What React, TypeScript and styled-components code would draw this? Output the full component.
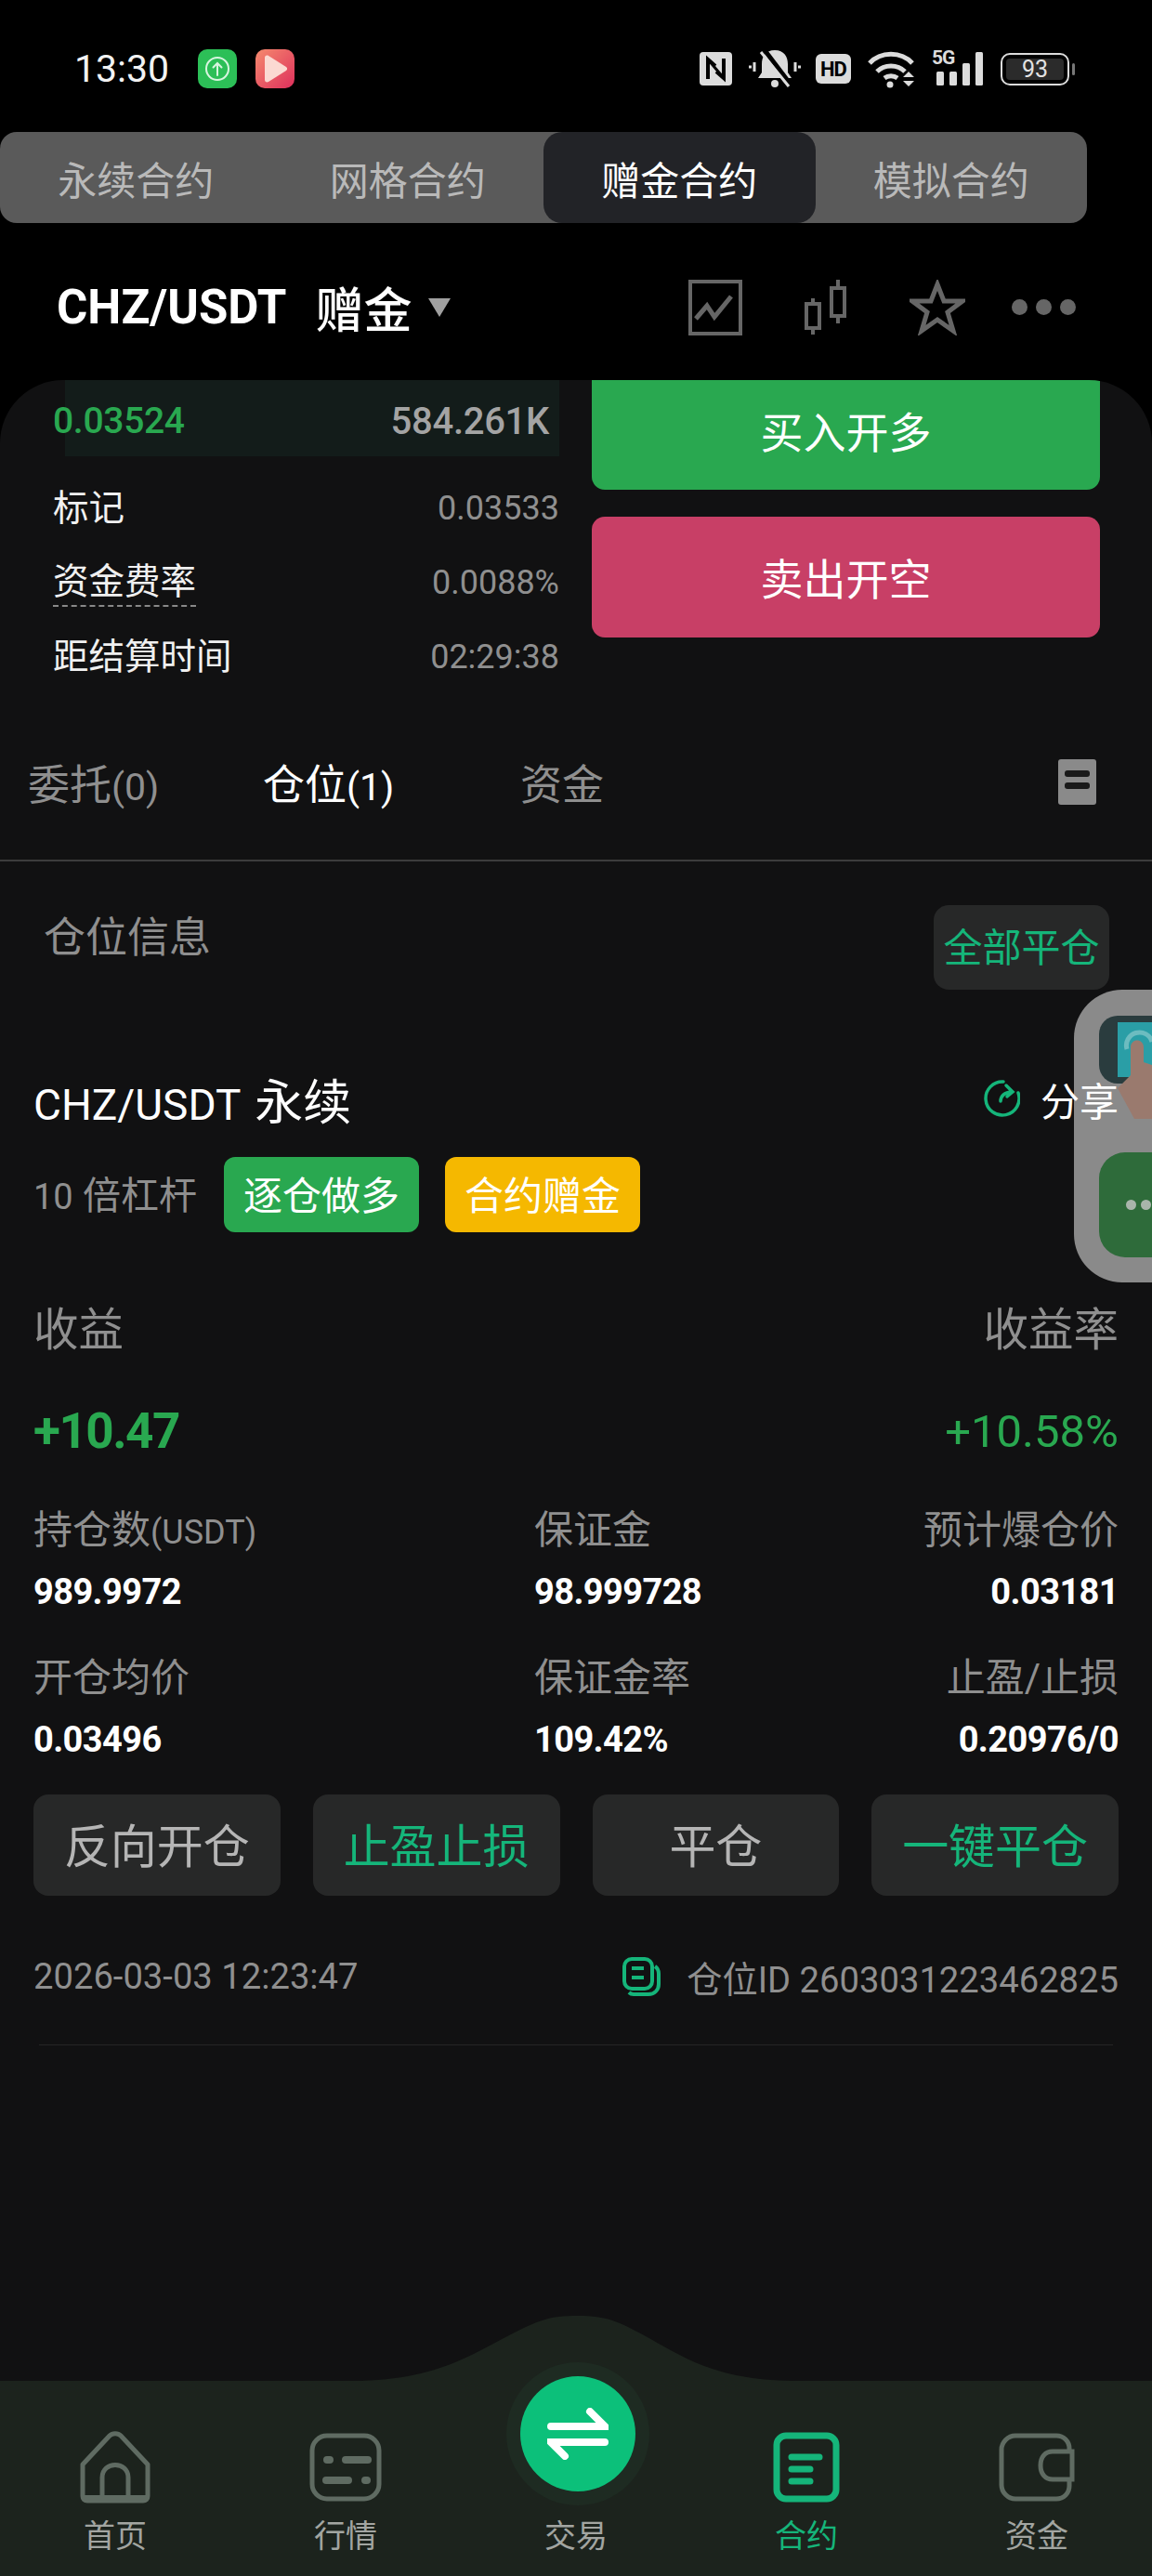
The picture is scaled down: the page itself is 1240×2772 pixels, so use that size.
import React from "react";
import styled, { createGlobalStyle } from "styled-components";

const GlobalStyle = createGlobalStyle`
  html, body {
    margin: 0;
    padding: 0;
    background: #000;
  }
  * {
    box-sizing: border-box;
  }
`;

const GREEN = "#29a850";
const MINT = "#15b57a";
const GREY = "#8f8f8f";

const Page = styled.div`
  position: relative;
  width: 1240px;
  height: 2772px;
  overflow: hidden;
  display: flex;
  flex-direction: column;
  background: #000;
  color: #fff;
  font-family: Roboto, "Noto Sans CJK SC", sans-serif;
`;

/* status bar */
const StatusBar = styled.div`
  height: 142px;
  padding: 53px 89px 0 80px;
  display: flex;
  align-items: flex-start;
  justify-content: space-between;
`;

const StatusLeft = styled.div`
  display: flex;
  align-items: center;
  height: 42px;
`;

const Clock = styled.span`
  font-size: 41px;
  width: 133px;
  color: #f2f2f2;
`;

const AppTile = styled.div<{ $bg: string }>`
  width: 42px;
  height: 42px;
  border-radius: 10px;
  margin-right: 20px;
  background: ${(p) => p.$bg};
  display: flex;
  align-items: center;
  justify-content: center;
`;

const StatusRight = styled.div`
  display: flex;
  align-items: center;
  height: 42px;
`;

const BellIcon = styled.svg`
  margin-left: 18px;
`;

const HdBadge = styled.span`
  width: 38px;
  height: 32px;
  margin: 0 18px 0 16px;
  border-radius: 6px;
  background: #dcdcdc;
  color: #000;
  font-size: 22px;
  font-weight: 700;
  letter-spacing: -1px;
  display: flex;
  align-items: center;
  justify-content: center;
`;

const SignalWrap = styled.div`
  position: relative;
  width: 56px;
  height: 42px;
  margin: 0 18px 0 15px;
`;

const FiveG = styled.span`
  position: absolute;
  left: 0;
  top: -2px;
  font-size: 21px;
  font-weight: 700;
  color: #dcdcdc;
  letter-spacing: -1px;
  line-height: 22px;
`;

const Battery = styled.div`
  position: relative;
  width: 74px;
  height: 35px;
  border: 2px solid #dcdcdc;
  border-radius: 10px;
  padding: 4px;
  &::after {
    content: "";
    position: absolute;
    right: -8px;
    top: 9px;
    width: 3px;
    height: 13px;
    border-radius: 2px;
    background: #777;
  }
`;

const BatteryFill = styled.div`
  height: 100%;
  border-radius: 4px;
  background: #2b2b2b;
  color: #e2e2e2;
  font-size: 25px;
  display: flex;
  align-items: center;
  justify-content: center;
`;

/* contract switcher */
const Segmented = styled.div`
  width: 1170px;
  height: 98px;
  flex-shrink: 0;
  border-radius: 18px;
  background: #5a5a5a;
  display: grid;
  grid-template-columns: repeat(4, 1fr);
`;

const Segment = styled.div<{ $active?: boolean }>`
  border-radius: 20px;
  display: flex;
  align-items: center;
  justify-content: center;
  font-size: 42px;
  background: ${(p) => (p.$active ? "#222327" : "transparent")};
  color: ${(p) => (p.$active ? "#fff" : "#b9b9b9")};
`;

/* pair header */
const PairHeader = styled.div`
  height: 169px;
  flex-shrink: 0;
  padding: 23px 82px 11px 61px;
  display: flex;
  align-items: center;
`;

const PairName = styled.span`
  font-size: 51px;
  font-weight: 700;
  margin-right: 31px;
`;

const PairTag = styled.span`
  font-size: 52px;
  font-weight: 500;
  margin-right: 18px;
`;

const Caret = styled.span`
  width: 0;
  height: 0;
  border-left: 12px solid transparent;
  border-right: 12px solid transparent;
  border-top: 20px solid #a0a0a0;
  margin-right: auto;
`;

const HeaderIcons = styled.div`
  display: flex;
  align-items: center;
  gap: 66px;
`;

const Dots = styled.div`
  display: flex;
  gap: 9px;
  margin-left: -16px;
`;

const Dot = styled.span<{ $size?: number; $color?: string }>`
  width: ${(p) => p.$size ?? 17}px;
  height: ${(p) => p.$size ?? 17}px;
  border-radius: 50%;
  background: ${(p) => p.$color ?? "#666"};
`;

/* main panel */
const Panel = styled.div`
  flex: 1;
  display: flex;
  flex-direction: column;
  background: #111112;
  border-radius: 68px 68px 0 0;
  overflow: hidden;
`;

const TradeArea = styled.div`
  height: 354px;
  flex-shrink: 0;
  padding: 0 56px 0 57px;
  display: grid;
  grid-template-columns: 545px 547px;
  column-gap: 35px;
`;

const BookRow = styled.div`
  height: 82px;
  padding: 6px 11px 0 0;
  display: flex;
  align-items: center;
  justify-content: space-between;
  background: linear-gradient(to right, transparent 13px, #131c1a 13px);
`;

const BidPrice = styled.span`
  font-size: 39px;
  font-weight: 500;
  letter-spacing: -0.300px;
  color: ${GREEN};
`;

const BidSize = styled.span`
  font-size: 40px;
  font-weight: 500;
  letter-spacing: -0.300px;
  color: #a4a4a4;
`;

const InfoRow = styled.div`
  height: 80px;
  padding-top: 2px;
  display: flex;
  align-items: center;
  justify-content: space-between;
  &:nth-child(2) {
    margin-top: 15px;
  }
`;

const InfoLabel = styled.span<{ $dashed?: boolean }>`
  font-size: 38.5px;
  color: #f0f0f0;
  line-height: 50px;
  border-bottom: ${(p) => (p.$dashed ? "2px dashed #888" : "0")};
`;

const InfoValue = styled.span`
  font-size: 36px;
  color: ${GREY};
`;

const TradeButtons = styled.div`
  display: flex;
  flex-direction: column;
`;

const TradeButton = styled.div<{ $bg: string; $h: number; $mt?: number }>`
  height: ${(p) => p.$h}px;
  margin-top: ${(p) => p.$mt ?? 0}px;
  padding-bottom: ${(p) => (p.$mt ? 3 : 12)}px;
  background: ${(p) => p.$bg};
  border-radius: ${(p) => (p.$mt ? "14px" : "0 0 14px 14px")};
  display: flex;
  align-items: center;
  justify-content: center;
  font-size: 46px;
`;

const OrderTabs = styled.div`
  height: 164px;
  flex-shrink: 0;
  padding: 0 60px 6px 30px;
  display: grid;
  grid-template-columns: 253px 277px 1fr auto;
  align-items: center;
  border-bottom: 2px solid #3c3c3c;
`;

const OrderTab = styled.span<{ $active?: boolean }>`
  font-size: 45px;
  color: ${(p) => (p.$active ? "#fff" : GREY)};
`;

const Count = styled.span`
  font-size: 41px;
`;

const DocIcon = styled.div`
  width: 41px;
  height: 49px;
  background: #8a8a8a;
  border-radius: 3px;
  display: flex;
  flex-direction: column;
  justify-content: center;
  gap: 6px;
  padding: 0 7px 4px;
`;

const DocLine = styled.span`
  height: 7px;
  border-radius: 3px;
  background: #1a1a1a;
`;

const SectionHead = styled.div`
  padding: 47px 46px 0 47px;
  display: flex;
  justify-content: space-between;
  align-items: flex-start;
`;

const SectionTitle = styled.span`
  font-size: 45px;
  color: ${GREY};
  line-height: 72px;
`;

const CloseAll = styled.div`
  width: 189px;
  height: 91px;
  padding-bottom: 6px;
  border-radius: 16px;
  background: #272828;
  color: ${MINT};
  font-size: 42px;
  display: flex;
  align-items: center;
  justify-content: center;
`;

const Position = styled.div`
  padding: 0 36px;
  display: flex;
  flex-direction: column;
`;

const TitleRow = styled.div`
  height: 70px;
  margin-top: 85px;
  padding-bottom: 6px;
  display: flex;
  align-items: center;
  justify-content: space-between;
`;

const PositionName = styled.span`
  font-size: 52px;
`;

const PositionPair = styled.span`
  font-size: 46px;
  margin-right: 2px;
`;

const Share = styled.div`
  position: relative;
  z-index: 2;
  display: flex;
  align-items: center;
  gap: 22px;
  font-size: 42px;
`;

const TagRow = styled.div`
  height: 81px;
  margin-top: 25px;
  display: flex;
  align-items: center;
`;

const Leverage = styled.span`
  font-size: 41px;
  width: 205px;
  padding-bottom: 5px;
  color: ${GREY};
`;

const LeverageNum = styled.span`
  font-size: 38px;
`;

const Tag = styled.div<{ $bg: string }>`
  width: 210px;
  height: 81px;
  margin-right: 28px;
  padding-bottom: 5px;
  border-radius: 12px;
  background: ${(p) => p.$bg};
  font-size: 42px;
  display: flex;
  align-items: center;
  justify-content: center;
`;

const PnlLabels = styled.div`
  height: 60px;
  margin-top: 74px;
  padding-bottom: 6px;
  display: flex;
  align-items: center;
  justify-content: space-between;
`;

const PnlValues = styled.div`
  height: 60px;
  margin-top: 47px;
  padding-top: 6px;
  display: flex;
  align-items: center;
  justify-content: space-between;
`;

const PnlLabel = styled.span`
  font-size: 48.5px;
  color: ${GREY};
`;

const PnlValue = styled.span`
  font-size: 53px;
  font-weight: 700;
  letter-spacing: -1.5px;
  color: ${GREEN};
`;

const PnlRate = styled.span`
  font-size: 49px;
  color: ${GREEN};
`;

const Stats = styled.div`
  margin-top: 53px;
  display: grid;
  grid-template-columns: 539px 1fr 1fr;
  row-gap: 43px;
`;

const Stat = styled.div<{ $right?: boolean }>`
  display: flex;
  flex-direction: column;
  align-items: ${(p) => (p.$right ? "flex-end" : "flex-start")};
`;

const StatLabel = styled.span`
  height: 50px;
  line-height: 54px;
  font-size: 42px;
  color: ${GREY};
  white-space: nowrap;
`;

const LabelUnit = styled.span`
  font-size: 36px;
`;

const StatValue = styled.span`
  height: 46px;
  line-height: 46px;
  margin-top: 20px;
  font-size: 38px;
  font-weight: 700;
  letter-spacing: -0.6px;
  color: #fff;
`;

const Actions = styled.div`
  margin-top: 36px;
  display: grid;
  grid-template-columns: repeat(4, 1fr);
  column-gap: 35px;
`;

const Action = styled.div<{ $mint?: boolean }>`
  height: 109px;
  padding-bottom: 6px;
  border-radius: 16px;
  background: #272828;
  color: ${(p) => (p.$mint ? MINT : "#b5b5b5")};
  font-size: 50px;
  display: flex;
  align-items: center;
  justify-content: center;
`;

const FootRow = styled.div`
  height: 50px;
  margin-top: 62px;
  display: flex;
  align-items: center;
  justify-content: space-between;
`;

const FootText = styled.span`
  font-size: 38.2px;
  color: ${GREY};
`;

const FootId = styled.div`
  display: flex;
  align-items: center;
  gap: 28px;
`;

const CardRule = styled.div`
  height: 1px;
  margin: 48px 6px 0;
  background: #252525;
`;

/* floating assistant */
const FloatPill = styled.div`
  position: absolute;
  right: 0;
  top: 1065px;
  width: 84px;
  height: 315px;
  padding: 28px 0 0 27px;
  border-radius: 52px 0 0 52px;
  background: #8a8a8a;
`;

const PillHand = styled.div`
  width: 57px;
  height: 73px;
  border-radius: 20px 0 0 20px;
  background: #2a3c3e;
`;

const HandDrawing = styled.svg`
  display: block;
`;

const PillMore = styled.div`
  width: 57px;
  height: 113px;
  margin-top: 74px;
  padding-left: 29px;
  border-radius: 28px 0 0 28px;
  background: #2e6b3a;
  display: flex;
  align-items: center;
  gap: 5px;
  overflow: hidden;
`;

/* bottom navigation */
const BottomNav = styled.div`
  position: relative;
  height: 210px;
  flex-shrink: 0;
  background: #1c231d;
  display: grid;
  grid-template-columns: repeat(5, 1fr);
  align-items: end;
  padding-bottom: 19px;
`;

const NavBump = styled.svg`
  position: absolute;
  left: 360px;
  top: -70px;
`;

const TradeHalo = styled.div`
  position: absolute;
  left: 545px;
  top: -20px;
  width: 154px;
  height: 154px;
  border-radius: 50%;
  background: #1e2b22;
  display: flex;
  align-items: center;
  justify-content: center;
`;

const TradeDisc = styled.div`
  width: 124px;
  height: 124px;
  border-radius: 50%;
  background: #0cc07a;
  display: flex;
  align-items: center;
  justify-content: center;
`;

const NavItem = styled.div<{ $active?: boolean }>`
  display: flex;
  flex-direction: column;
  align-items: center;
  color: ${(p) => (p.$active ? MINT : "#a2a5a1")};
`;

const NavIcon = styled.div`
  height: 80px;
  display: flex;
  align-items: center;
  justify-content: center;
`;

const NavLabel = styled.span`
  height: 50px;
  line-height: 52px;
  margin-top: 8px;
  font-size: 34px;
`;

const stats = [
  { label: <>持仓数<LabelUnit>(USDT)</LabelUnit></>, value: "989.9972" },
  { label: "保证金", value: "98.999728" },
  { label: "预计爆仓价", value: "0.03181", right: true },
  { label: "开仓均价", value: "0.03496" },
  { label: "保证金率", value: "109.42%" },
  { label: "止盈/止损", value: "0.20976/0", right: true },
];

const navStroke = "#5f6b62";

const App = () => {
  return (
    <Page>
      <GlobalStyle />
      <StatusBar>
        <StatusLeft>
          <Clock>13:30</Clock>
          <AppTile $bg="#2cbf57">
            <svg width="28" height="28" viewBox="0 0 28 28" fill="none" stroke="#d8f5e0" strokeWidth="2">
              <circle cx="14" cy="14" r="12" />
              <path d="M14 21V8M9.5 12.5 14 8l4.5 4.5" strokeLinecap="round" />
            </svg>
          </AppTile>
          <AppTile $bg="linear-gradient(135deg, #f58a6e, #de2f5c)">
            <svg width="28" height="30" viewBox="0 0 28 30">
              <path d="M3 3c0-2 2-3 4-2l19 12c1.5 1 1.5 3 0 4L7 29c-2 1-4 0-4-2z" fill="#fbd9d2" />
            </svg>
          </AppTile>
        </StatusLeft>
        <StatusRight>
          <svg width="35" height="36" viewBox="0 0 35 36">
            <rect width="35" height="36" rx="4" fill="#dcdcdc" />
            <path d="M9 29V8l8 7M26 7v21l-8-7" fill="none" stroke="#000" strokeWidth="4" />
            <path d="M9 8l17 20" stroke="#000" strokeWidth="3" />
          </svg>
          <BellIcon width="56" height="42" viewBox="0 0 56 42">
            <path d="M28 1c10 0 14 7 14 15v9l4 6H10l4-6v-9C14 8 18 1 28 1z" fill="#dcdcdc" />
            <circle cx="28" cy="37" r="4" fill="#dcdcdc" />
            <path d="M17 1l28 37" stroke="#000" strokeWidth="5" />
            <path d="M13 3l30 37" stroke="#dcdcdc" strokeWidth="3" />
            <path d="M0 19h3M6 14v10M50 14v10M53 19h3" stroke="#dcdcdc" strokeWidth="3" />
          </BellIcon>
          <HdBadge>HD</HdBadge>
          <svg width="54" height="42" viewBox="0 0 54 42" fill="none" stroke="#dcdcdc" strokeWidth="5">
            <path d="M2 15C14 2 36 2 48 15" />
            <path d="M10 24c8-8 22-8 30 0" />
            <path d="M18 31c4-3 10-3 14 0" />
            <circle cx="24" cy="38" r="3.5" fill="#dcdcdc" stroke="none" />
            <path d="M38 30l6-6 6 6zM38 34l6 6 6-6z" fill="#dcdcdc" stroke="none" />
          </svg>
          <SignalWrap>
            <FiveG>5G</FiveG>
            <svg width="56" height="42" viewBox="0 0 56 42" fill="#dcdcdc">
              <rect x="5" y="24" width="8" height="15" rx="1.5" />
              <rect x="19" y="24" width="8" height="15" rx="1.5" />
              <rect x="33" y="15" width="8" height="24" rx="1.5" />
              <rect x="47" y="3" width="8" height="36" rx="1.5" />
            </svg>
          </SignalWrap>
          <Battery>
            <BatteryFill>93</BatteryFill>
          </Battery>
        </StatusRight>
      </StatusBar>

      <Segmented>
        <Segment>永续合约</Segment>
        <Segment>网格合约</Segment>
        <Segment $active>赠金合约</Segment>
        <Segment>模拟合约</Segment>
      </Segmented>

      <PairHeader>
        <PairName>CHZ/USDT</PairName>
        <PairTag>赠金</PairTag>
        <Caret />
        <HeaderIcons>
          <svg width="58" height="60" viewBox="0 0 58 60" fill="none" stroke="#666" strokeWidth="4">
            <rect x="2" y="2" width="54" height="56" />
            <path d="M8 42l12-14 8 12 18-22" strokeWidth="5" />
          </svg>
          <svg width="48" height="60" viewBox="0 0 48 60" fill="none" stroke="#666" strokeWidth="4">
            <rect x="3" y="26" width="14" height="26" />
            <path d="M10 20v6M10 52v7" />
            <rect x="30" y="9" width="14" height="30" />
            <path d="M37 0v9M37 39v8" />
          </svg>
          <svg width="60" height="60" viewBox="0 0 60 60" fill="none" stroke="#666" strokeWidth="5">
            <path d="M30 5l7 18h20L41 35l6 20-17-12-17 12 6-20L3 23h20z" />
          </svg>
          <Dots>
            <Dot />
            <Dot />
            <Dot />
          </Dots>
        </HeaderIcons>
      </PairHeader>

      <Panel>
        <TradeArea>
          <div>
            <BookRow>
              <BidPrice>0.03524</BidPrice>
              <BidSize>584.261K</BidSize>
            </BookRow>
            <InfoRow>
              <InfoLabel>标记</InfoLabel>
              <InfoValue>0.03533</InfoValue>
            </InfoRow>
            <InfoRow>
              <InfoLabel $dashed>资金费率</InfoLabel>
              <InfoValue>0.0088%</InfoValue>
            </InfoRow>
            <InfoRow>
              <InfoLabel>距结算时间</InfoLabel>
              <InfoValue>02:29:38</InfoValue>
            </InfoRow>
          </div>
          <TradeButtons>
            <TradeButton $bg={GREEN} $h={118}>买入开多</TradeButton>
            <TradeButton $bg="#c83f66" $h={130} $mt={29}>卖出开空</TradeButton>
          </TradeButtons>
        </TradeArea>

        <OrderTabs>
          <OrderTab>委托<Count>(0)</Count></OrderTab>
          <OrderTab $active>仓位<Count>(1)</Count></OrderTab>
          <OrderTab>资金</OrderTab>
          <DocIcon>
            <DocLine />
            <DocLine />
          </DocIcon>
        </OrderTabs>

        <SectionHead>
          <SectionTitle>仓位信息</SectionTitle>
          <CloseAll>全部平仓</CloseAll>
        </SectionHead>

        <Position>
          <TitleRow>
            <PositionName><PositionPair>CHZ/USDT</PositionPair> 永续</PositionName>
            <Share>
              <svg width="42" height="42" viewBox="0 0 42 42" fill="none" stroke={MINT} strokeWidth="3.5" strokeLinecap="round">
                <path d="M24 3a18 18 0 1 0 16 12" />
                <path d="M21 24c0-5 4-10 12-10M27 7l7 7-6 5" />
              </svg>
              分享
            </Share>
          </TitleRow>

          <TagRow>
            <Leverage><LeverageNum>10</LeverageNum> 倍杠杆</Leverage>
            <Tag $bg={GREEN}>逐仓做多</Tag>
            <Tag $bg="#f5b800">合约赠金</Tag>
          </TagRow>

          <PnlLabels>
            <PnlLabel>收益</PnlLabel>
            <PnlLabel>收益率</PnlLabel>
          </PnlLabels>
          <PnlValues>
            <PnlValue>+10.47</PnlValue>
            <PnlRate>+10.58%</PnlRate>
          </PnlValues>

          <Stats>
            {stats.map((s) => (
              <Stat key={s.value} $right={s.right}>
                <StatLabel>{s.label}</StatLabel>
                <StatValue>{s.value}</StatValue>
              </Stat>
            ))}
          </Stats>

          <Actions>
            <Action>反向开仓</Action>
            <Action $mint>止盈止损</Action>
            <Action>平仓</Action>
            <Action $mint>一键平仓</Action>
          </Actions>

          <FootRow>
            <FootText>2026-03-03 12:23:47</FootText>
            <FootId>
              <svg width="42" height="42" viewBox="0 0 42 42" fill="none" stroke={MINT} strokeWidth="4">
                <rect x="3" y="2" width="30" height="32" rx="8" />
                <path d="M11 12h13M11 22h13" />
                <path d="M36 10c3 2 4 5 4 8v11c0 6-4 11-11 11H13c-2 0-4-1-5-2" />
              </svg>
              <FootText>仓位ID 2603031223462825</FootText>
            </FootId>
          </FootRow>
          <CardRule />
        </Position>
      </Panel>

      <FloatPill>
        <PillHand>
          <HandDrawing width="57" height="111" viewBox="0 0 57 111">
            <rect x="20" y="7" width="37" height="59" fill="#2a9ea6" />
            <path d="M30 36a14 14 0 0 1 27-8" fill="none" stroke="#6cbcc0" strokeWidth="5" />
            <path d="M34 34c0-10 14-10 14 0v16l9 3v58H38L20 78l14-14z" fill="#9a7a6e" />
          </HandDrawing>
        </PillHand>
        <PillMore>
          <Dot $size={11} $color="#a9b5ab" />
          <Dot $size={11} $color="#a9b5ab" />
        </PillMore>
      </FloatPill>

      <BottomNav>
        <NavBump width="520" height="72" viewBox="0 0 520 72">
          <path d="M0 70h20C110 70 150 40 190 20 C220 5 230 0 262 0 C294 0 305 6 335 22 C375 44 410 70 500 70h20v2H0z" fill="#1c231d" />
        </NavBump>

        <NavItem>
          <NavIcon>
            <svg width="78" height="78" viewBox="0 0 78 78" fill="none" stroke={navStroke} strokeWidth="5" strokeLinejoin="round">
              <path d="M4 36L33 5c3-3 9-3 12 0l29 31v34c0 3-2 5-5 5H9c-3 0-5-2-5-5z" />
              <path d="M25 73V50c0-18 28-18 28 0v23" />
              <path d="M4 72h70" strokeWidth="6" />
            </svg>
          </NavIcon>
          <NavLabel>首页</NavLabel>
        </NavItem>
        <NavItem>
          <NavIcon>
            <svg width="78" height="74" viewBox="0 0 78 74" fill="none" stroke={navStroke} strokeWidth="5" strokeLinecap="round">
              <rect x="3" y="3" width="72" height="68" rx="16" />
              <path d="M19 29h3M39 29h24M18 51h24M60 51h2" strokeWidth="8" />
            </svg>
          </NavIcon>
          <NavLabel>行情</NavLabel>
        </NavItem>
        <NavItem>
          <NavIcon />
          <NavLabel>交易</NavLabel>
        </NavItem>
        <NavItem $active>
          <NavIcon>
            <svg width="72" height="76" viewBox="0 0 72 76" fill="none" stroke={MINT} strokeWidth="7" strokeLinecap="round">
              <rect x="4" y="4" width="64" height="68" rx="10" />
              <path d="M20 27h30M20 40h20M20 53h20" strokeWidth="7" />
            </svg>
          </NavIcon>
          <NavLabel>合约</NavLabel>
        </NavItem>
        <NavItem>
          <NavIcon>
            <svg width="82" height="74" viewBox="0 0 82 74" fill="none" stroke={navStroke} strokeWidth="5">
              <path d="M76 20v-3c0-8-6-14-14-14H18C10 3 3 10 3 18v38c0 8 7 15 15 15h44c8 0 14-6 14-14v-7" />
              <path d="M79 20H58c-8 0-13 6-13 15s5 15 13 15h21z" />
            </svg>
          </NavIcon>
          <NavLabel>资金</NavLabel>
        </NavItem>

        <TradeHalo>
          <TradeDisc>
            <svg width="66" height="56" viewBox="0 0 66 56" fill="none" stroke="#fff" strokeWidth="8" strokeLinecap="round">
              <path d="M4 20h58L46 4" />
              <path d="M62 37H4l15 15" />
            </svg>
          </TradeDisc>
        </TradeHalo>
      </BottomNav>
    </Page>
  );
};

export default App;
